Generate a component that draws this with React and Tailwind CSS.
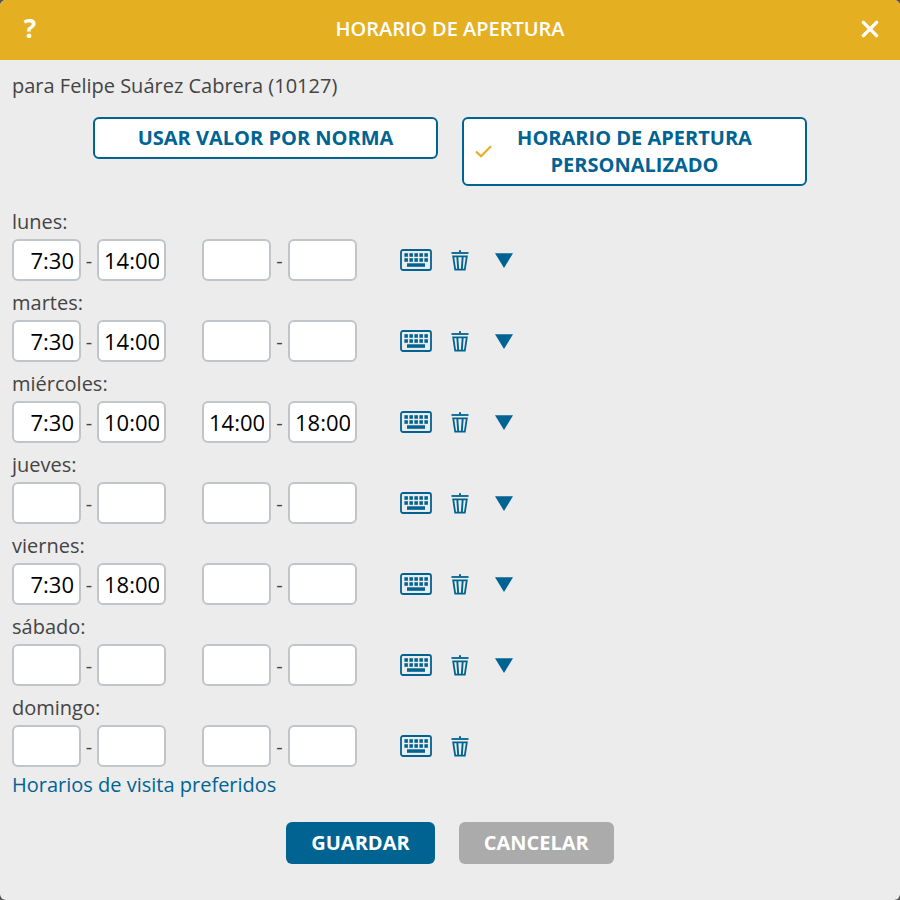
import { useState } from 'react'

const DAYS = [
  { key: 'mon', label: 'lunes', times: ['7:30', '14:00', '', ''] },
  { key: 'tue', label: 'martes', times: ['7:30', '14:00', '', ''] },
  { key: 'wed', label: 'miércoles', times: ['7:30', '10:00', '14:00', '18:00'] },
  { key: 'thu', label: 'jueves', times: ['', '', '', ''] },
  { key: 'fri', label: 'viernes', times: ['7:30', '18:00', '', ''] },
  { key: 'sat', label: 'sábado', times: ['', '', '', ''] },
  { key: 'sun', label: 'domingo', times: ['', '', '', ''] },
]

const KEY_COLUMNS = [4, 9, 14, 19, 24]

function KeyboardIcon() {
  return (
    <svg width="32" height="22" viewBox="0 0 32 22" aria-hidden="true">
      <rect x="1" y="1" width="30" height="20" rx="2" fill="none" stroke="currentColor" strokeWidth="1.8" />
      {KEY_COLUMNS.map(x => (
        <g key={x} fill="currentColor">
          <rect x={x + 0.4} y="4.2" width="3.5" height="3.6" />
          <rect x={x + 0.4} y="9.2" width="3.5" height="3.6" />
        </g>
      ))}
      <rect x="7" y="14.3" width="18" height="3.5" fill="currentColor" />
    </svg>
  )
}

function TrashIcon() {
  return (
    <svg width="18" height="22" viewBox="0 0 18 22" fill="none" stroke="currentColor" aria-hidden="true">
      <path d="M.5 4h17" strokeWidth="1.8" />
      <path d="M9 1.2v2" strokeWidth="2" />
      <path d="M2.2 7.4h13.6l-2 13.3H4.2z" strokeWidth="1.8" />
      <path d="M6.3 7.4l.9 13M11.7 7.4l-.9 13" strokeWidth="1.9" />
    </svg>
  )
}

function TimeInput({ value, label, onChange }) {
  return (
    <input
      type="text"
      aria-label={label}
      value={value}
      onChange={e => onChange(e.target.value)}
      className="w-[69px] h-[42px] px-[5px] rounded-md border-2 border-[#c0c5c9] bg-white text-right text-[22px] font-normal text-black"
    />
  )
}

function DayRow({ day, times, onChange, onClear, onCopyDown }) {
  const field = (index, name) => (
    <TimeInput value={times[index]} label={`${day.label} ${name}`} onChange={v => onChange(index, v)} />
  )

  return (
    <fieldset>
      <legend className="mb-1">{day.label}:</legend>
      <div className="flex items-center gap-9">
        <div className="flex items-center">
          {field(0, 'desde')}
          <span className="w-4 text-center">-</span>
          {field(1, 'hasta')}
        </div>
        <div className="flex items-center">
          {field(2, 'desde 2')}
          <span className="w-[17px] text-center">-</span>
          {field(3, 'hasta 2')}
        </div>
        <div className="flex items-center pl-px text-[#006392]">
          <button type="button" aria-label="Teclado" className="flex w-11 h-[42px] items-center justify-center">
            <KeyboardIcon />
          </button>
          <button type="button" aria-label="Borrar" onClick={onClear} className="flex w-11 h-[42px] items-center justify-center">
            <TrashIcon />
          </button>
          {onCopyDown && (
            <button type="button" aria-label="Copiar abajo" onClick={onCopyDown} className="flex w-11 h-[42px] items-center justify-center">
              <svg width="18" height="16" viewBox="0 0 18 16" fill="currentColor" aria-hidden="true">
                <path d="M0 1.2h18L9 16z" />
              </svg>
            </button>
          )}
        </div>
      </div>
    </fieldset>
  )
}

export default function App() {
  const [hours, setHours] = useState(DAYS.map(day => day.times))
  const [custom, setCustom] = useState(true)

  const setDay = (index, times) => setHours(hours.map((h, i) => (i === index ? times : h)))

  const modes = [
    { label: 'USAR VALOR POR NORMA', active: !custom, select: () => setCustom(false) },
    { label: 'HORARIO DE APERTURA PERSONALIZADO', active: custom, select: () => setCustom(true) },
  ]

  return (
    <div className="min-h-screen flex bg-[#555555]">
      <div className="flex-1 flex flex-col rounded-md overflow-hidden bg-[#ececec] text-[#444444] font-normal text-[20px] leading-[27px] font-['Open_Sans',sans-serif]">
        <header className="flex h-[60px] items-center justify-between bg-[#e5af22] pb-[3px] text-white">
          <button type="button" aria-label="Ayuda" className="w-[60px] text-[26px] font-bold">?</button>
          <h1 className="font-semibold">HORARIO DE APERTURA</h1>
          <button type="button" aria-label="Cerrar" className="flex w-[60px] h-full items-center justify-center">
            <svg width="18" height="18" viewBox="0 0 18 18" fill="none" stroke="currentColor" strokeWidth="3.4" strokeLinecap="round" aria-hidden="true">
              <path d="M2.4 2.4l13.2 13.2M15.6 2.4L2.4 15.6" />
            </svg>
          </button>
        </header>

        <main className="flex flex-col px-3 pt-3">
          <p>para Felipe Suárez Cabrera (10127)</p>

          <div className="flex items-start justify-center gap-6 pt-[18px] pb-[22px]">
            {modes.map(mode => (
              <button
                key={mode.label}
                type="button"
                aria-pressed={mode.active}
                onClick={mode.select}
                className="relative w-[345px] px-10 pt-[5px] pb-[6px] rounded-md border-2 border-[#006392] bg-white font-bold text-[#006392]"
              >
                {mode.active && (
                  <svg className="absolute left-[11px] top-1/2 -translate-y-1/2" width="17" height="14" viewBox="0 0 17 14" fill="none" stroke="#e5af22" strokeWidth="2.2" aria-hidden="true">
                    <path d="M1 6.5l5 4.8L16 1.2" />
                  </svg>
                )}
                {mode.label}
              </button>
            ))}
          </div>

          <div className="flex flex-col gap-2">
            {DAYS.map((day, index) => (
              <DayRow
                key={day.key}
                day={day}
                times={hours[index]}
                onChange={(slot, value) => setDay(index, hours[index].map((t, i) => (i === slot ? value : t)))}
                onClear={() => setDay(index, ['', '', '', ''])}
                onCopyDown={index < DAYS.length - 1 ? () => setDay(index + 1, hours[index]) : undefined}
              />
            ))}
          </div>

          <a href="#visitas" className="self-start mt-1 text-[#006392]">Horarios de visita preferidos</a>
        </main>

        <footer className="flex justify-center gap-6 pt-6 pb-9 font-bold text-white">
          <button type="button" className="px-[25px] pt-[7px] pb-2 rounded-md bg-[#006392]">GUARDAR</button>
          <button type="button" className="px-[25px] pt-[7px] pb-2 rounded-md bg-[#ababab]">CANCELAR</button>
        </footer>
      </div>
    </div>
  )
}
